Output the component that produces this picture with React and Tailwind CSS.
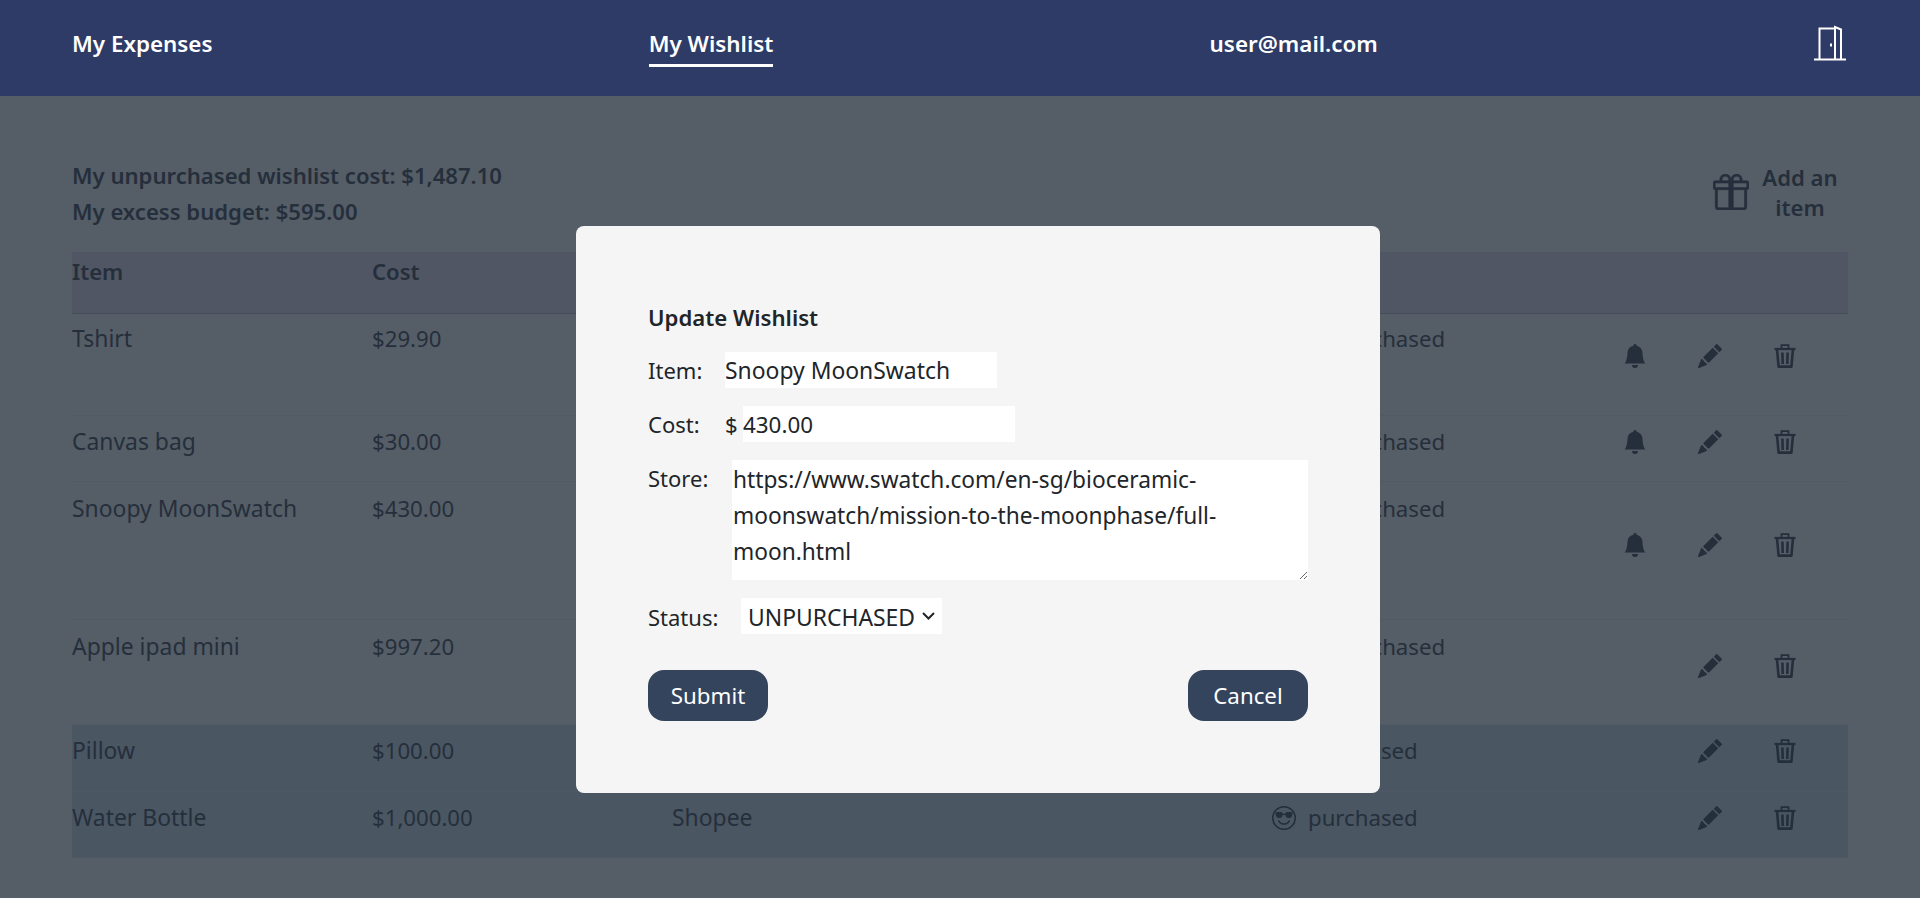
import React from "react";
import { BsBellFill, BsPencilFill, BsGift, BsEmojiSunglasses } from "react-icons/bs";

const font = "font-['Noto_Sans','Open_Sans',sans-serif]";

const rows = [
  { item: "Tshirt", cost: "$29.90", status: "unpurchased", h: "h-[102px]", tp: "pt-[7px]", pt: "pt-[30px]", bell: true },
  { item: "Canvas bag", cost: "$30.00", status: "unpurchased", h: "h-[66px]", tp: "pt-[8px]", pt: "pt-[14px]", bell: true },
  { item: "Snoopy MoonSwatch", cost: "$430.00", status: "unpurchased", h: "h-[138px]", tp: "pt-[9px]", pt: "pt-[51px]", bell: true },
  { item: "Apple ipad mini", cost: "$997.20", status: "unpurchased", h: "h-[105px]", tp: "pt-[9px]", pt: "pt-[34px]" },
  { item: "Pillow", cost: "$100.00", status: "purchased", h: "h-[67px]", tp: "pt-[8px]", pt: "pt-[14px]", done: true },
  { item: "Water Bottle", cost: "$1,000.00", store: "Shopee", status: "purchased", h: "h-[66px]", tp: "pt-[8px]", pt: "pt-[14px]", done: true },
];

function Door() {
  return (
    <svg width="32" height="36" viewBox="0 0 32 36" fill="none" stroke="white" strokeWidth="2" className="-mt-[1px] mr-[2px]">
      <path d="M0 34.5H32" />
      <path d="M5.5 35V3.5H21" />
      <path d="M21 35V2L27 4.5V35" />
      <path d="M17 18.5V21.5" />
    </svg>
  );
}

function Trash() {
  return (
    <svg width="24" height="24" viewBox="0 0 24 24" fill="none" stroke="currentColor" className="mx-auto">
      <path d="M8.5 4.5V1.2H15.5V4.5" strokeWidth="1.8" />
      <path d="M1.5 5H22.5" strokeWidth="2.2" />
      <path d="M4 5L5.6 22.6H18.4L20 5" strokeWidth="2.6" strokeLinejoin="round" />
      <path d="M9.4 8.5L9.7 20M14.6 8.5L14.3 20" strokeWidth="2.6" />
    </svg>
  );
}

function Chevron() {
  return (
    <svg width="13" height="8" viewBox="0 0 13 8" fill="none" stroke="#212529" strokeWidth="2" className="absolute left-[181px] top-[14px] pointer-events-none">
      <path d="M1 1L6.5 6.5L12 1" />
    </svg>
  );
}

export default function App() {
  return (
    <div className={`min-h-[898px] bg-[#555d66] text-[22.9px] leading-[36px] text-[#252f3c] ${font}`}>
      <nav className="h-[96px] bg-[#2d3b66] px-[72px] pt-[26px] flex items-start justify-between text-white font-semibold text-[22.4px]">
        <span>My Expenses</span>
        <span className="border-b-[3px] border-white pb-[2px]">My Wishlist</span>
        <span>user@mail.com</span>
        <Door />
      </nav>

      <main className="px-[72px]">
        <div className="flex justify-between pt-[61px] h-[156px] font-semibold text-[22.1px]">
          <div>
            <p>My unpurchased wishlist cost: $1,487.10</p>
            <p>My excess budget: $595.00</p>
          </div>
          <div className="flex items-center h-[72px] pr-[8px] leading-[30px] text-center -mt-[1px]">
            <BsGift stroke="currentColor" strokeWidth="0.25" className="w-[36px] h-[36px] mr-[11px]" />
            <span className="w-[80px]">Add an item</span>
          </div>
        </div>

        <table className="w-full table-fixed border-collapse">
          <colgroup>
            <col className="w-[300px]" />
            <col className="w-[300px]" />
            <col className="w-[600px]" />
            <col className="w-[325px]" />
            <col className="w-[75px]" />
            <col className="w-[75px]" />
            <col className="w-[75px]" />
            <col />
          </colgroup>
          <thead>
            <tr className="h-[61px] bg-[#505663] border-b border-[#474d58] text-[22.1px] text-left align-top">
              <th className="font-semibold pt-[1px]">Item</th>
              <th className="font-semibold pt-[1px]">Cost</th>
              <th className="font-semibold pt-[1px]">Store</th>
              <th className="font-semibold pt-[1px]">Status</th>
              <th colSpan="4" />
            </tr>
          </thead>
          <tbody>
            {rows.map((r) => (
              <tr key={r.item} className={`${r.h} align-top border-b ${r.done ? "bg-[#4a5662] border-[#4d5864]" : "border-[#515962]"}`}>
                <td className={r.tp}>{r.item}</td>
                <td className={`${r.tp} text-[22.2px]`}>{r.cost}</td>
                <td className={r.tp}>{r.store}</td>
                <td className={`${r.tp} text-[22.2px]`}>
                  <span className="flex items-center gap-[12px]">
                    <BsEmojiSunglasses className="w-[24px] h-[24px]" />
                    {r.status}
                  </span>
                </td>
                <td className={r.pt}>{r.bell && <BsBellFill className="w-[24px] h-[24px] mx-auto" />}</td>
                <td className={r.pt}><BsPencilFill className="w-[24px] h-[24px] mx-auto" /></td>
                <td className={r.pt}><Trash /></td>
                <td />
              </tr>
            ))}
          </tbody>
        </table>
      </main>

      <div className="fixed left-[576px] top-[226px] w-[804px] h-[567px] bg-[#f5f5f5] rounded-[8px] px-[72px] pt-[74px] text-[22px] text-[#212529]">
        <h2 className="font-semibold text-[22.2px] mb-[16px]">Update Wishlist</h2>
        <div className="flex items-start mb-[18px]">
          <label className="w-[77px]">Item:</label>
          <input defaultValue="Snoopy MoonSwatch" className="w-[272px] h-[36px] pt-[2px] bg-white outline-none text-[22.9px]" />
        </div>
        <div className="flex items-start mb-[18px]">
          <label className="w-[77px]">Cost:</label>
          <span className="w-[18px]">$</span>
          <input defaultValue="430.00" className="w-[272px] h-[36px] pt-[2px] bg-white outline-none text-[22.4px]" />
        </div>
        <div className="flex items-start mb-[18px]">
          <label className="w-[84px]">Store:</label>
          <textarea
            defaultValue="https://www.swatch.com/en-sg/bioceramic-moonswatch/mission-to-the-moonphase/full-moon.html"
            className="w-[576px] h-[120px] bg-white outline-none px-[1px] py-[2px] text-[22.7px]"
          />
        </div>
        <div className="flex items-start mb-[35px]">
          <label className="w-[93px] pt-[1px]">Status:</label>
          <div className="relative w-[201px] h-[36px]">
            <select defaultValue="UNPURCHASED" className="appearance-none w-full h-full bg-white outline-none pl-[7px] pt-[2px] text-[22.9px]">
              <option>UNPURCHASED</option>
              <option>PURCHASED</option>
            </select>
            <Chevron />
          </div>
        </div>
        <div className="flex justify-between">
          <button className="w-[120px] h-[51px] rounded-[16px] bg-[#34445c] text-white text-[22.3px]">Submit</button>
          <button className="w-[120px] h-[51px] rounded-[16px] bg-[#34445c] text-white text-[22.3px]">Cancel</button>
        </div>
      </div>
    </div>
  );
}
